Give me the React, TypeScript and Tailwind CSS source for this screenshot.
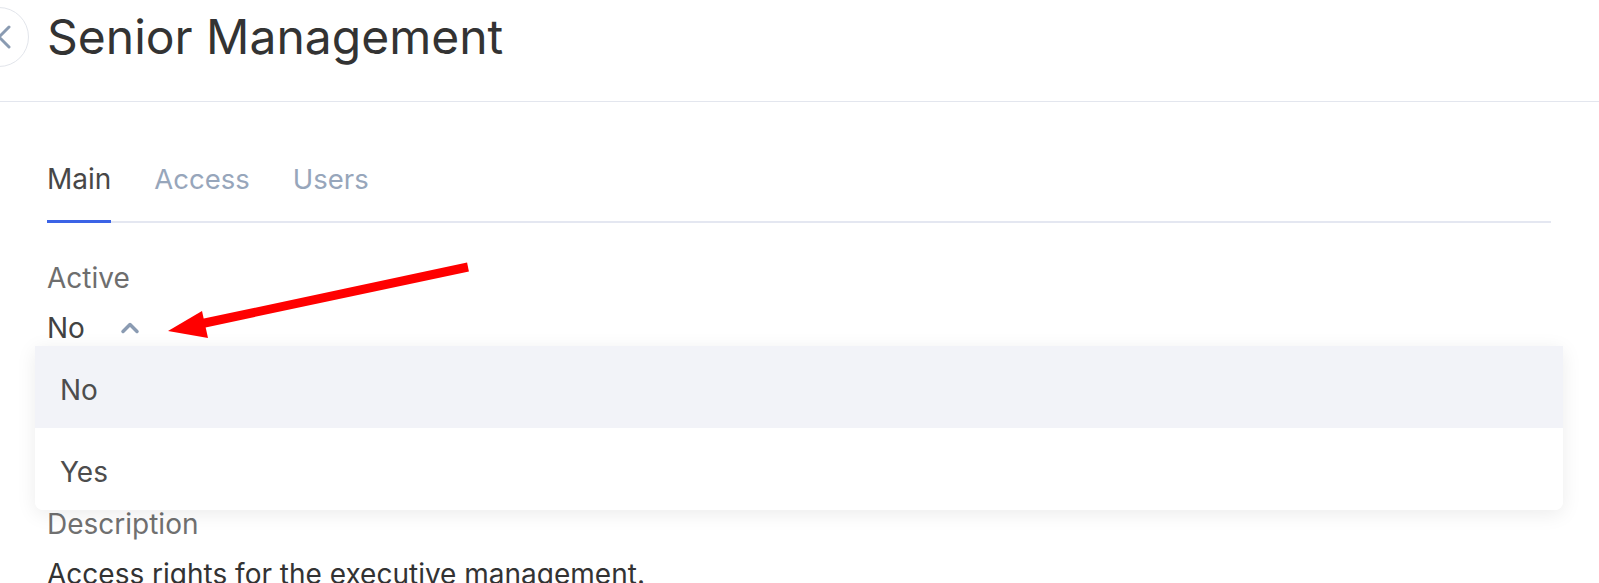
import { ChevronLeft, ChevronUp } from 'lucide-react';

export default function App() {
  return (
    <div className="relative w-[1599px] h-[583px] overflow-hidden bg-white font-['Inter',sans-serif]">
      {/* Header */}
      <div className="h-[102px] border-b border-[#e3e6ee]">
        <div className="flex items-center h-[74px]">
          <div className="flex items-center justify-center shrink-0 w-[60px] h-[60px] -ml-[31px] rounded-full border border-[#e2e5eb] bg-white">
            <ChevronLeft className="w-10 h-10 translate-x-[5px] text-[#8a9bb2]" strokeWidth={1.8} />
          </div>
          <h1 className="ml-[18px] text-[48px] leading-none text-[#333333]">Senior Management</h1>
        </div>
      </div>

      <div className="pl-[47px] pr-[48px]">
        {/* Tabs */}
        <div className="flex gap-[43px] mt-[57px] border-b-2 border-[#e4e7f1]">
          <div className="pb-[21px] -mb-[2px] border-b-[3px] border-[#3b63e6] text-[28px] leading-[40px] text-[#474747]">
            Main
          </div>
          <div className="pb-[21px] text-[27.5px] leading-[40px] text-[#97a6bb]">Access</div>
          <div className="pb-[21px] text-[27.5px] leading-[40px] text-[#97a6bb]">Users</div>
        </div>

        {/* Active field */}
        <div className="mt-[37px] text-[28px] leading-[36px] text-[#6e6e6e]">Active</div>
        <div className="flex items-center gap-[31px] mt-[14px] text-[28px] leading-[36px] text-[#424242]">
          <span>No</span>
          <ChevronUp className="w-[28px] h-[28px] text-[#8a9bb2]" strokeWidth={3} />
        </div>

        {/* Description */}
        <div className="mt-[160px] text-[28px] leading-[36px] text-[#707070]">Description</div>
        <div className="mt-[14px] text-[28px] leading-[36px] text-[#333333]">
          Access rights for the executive management.
        </div>
      </div>

      {/* Dropdown menu */}
      <div className="absolute left-[35px] top-[346px] w-[1528px] rounded-b-lg bg-white shadow-[0_4px_20px_rgba(0,0,0,0.08)] overflow-hidden">
        <div className="flex items-center h-[82px] pl-[25px] pt-[5px] bg-[#f2f3f8] text-[28px] text-[#4d4d4d]">No</div>
        <div className="flex items-center h-[82px] pl-[25px] pt-[5px] bg-white text-[28px] text-[#4d4d4d]">Yes</div>
      </div>

      {/* Annotation arrow */}
      <svg className="absolute left-0 top-0 pointer-events-none" width="1599" height="583">
        <line x1="468" y1="267" x2="200" y2="324" stroke="#ff0000" strokeWidth="9" />
        <polygon points="168,331 202,311 208,338" fill="#ff0000" />
      </svg>
    </div>
  );
}
